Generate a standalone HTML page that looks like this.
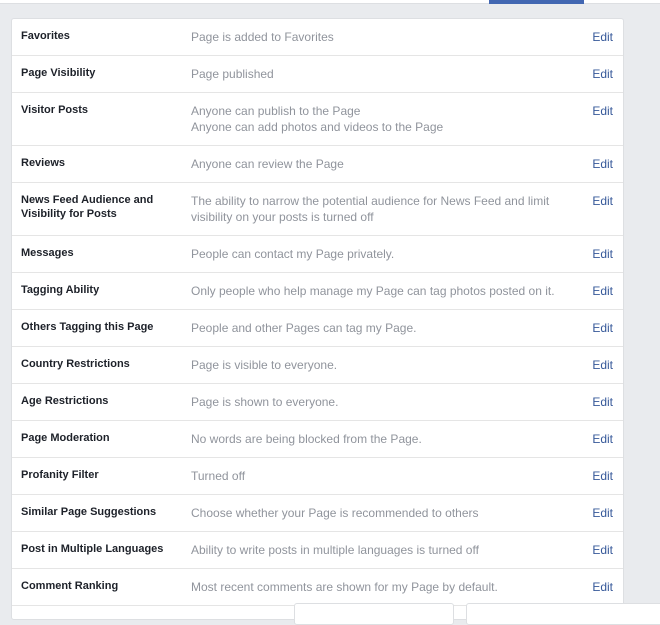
<!DOCTYPE html>
<html><head><style>
body{margin:0;width:660px;height:611px;background:#e9ebee;font-family:"Liberation Sans",Helvetica,Arial,sans-serif;position:relative;overflow:hidden}
.top{position:absolute;left:0;top:0;width:660px;height:3px;background:#fff;border-bottom:1px solid #dddfe2}
.tab{position:absolute;left:489px;top:0;width:95px;height:4px;background:#4267b2}
.card{position:absolute;left:11px;top:18px;width:611px;height:600px;background:#fff;border:1px solid #dddfe2;border-radius:3px}
.row{position:relative;border-bottom:1px solid #e5e5e5;padding:10px 0 10px 0;min-height:16px}
.l{position:absolute;left:9px;top:10px;width:160px;font-weight:bold;font-size:11px;line-height:14px;color:#1d2129}
.v{margin-left:179px;font-size:12px;line-height:16px;color:#90949c;width:380px}
.e{position:absolute;right:10px;top:10px;font-size:12px;line-height:16px;color:#365899}
.b{position:absolute;top:603px;height:20px;background:#fff;border:1px solid #dddfe2;border-radius:3px}
</style></head><body>
<div class="top"></div><div class="tab"></div>
<div class="card">
<div class="row"><div class="l">Favorites</div><div class="v">Page is added to Favorites</div><div class="e">Edit</div></div>
<div class="row"><div class="l">Page Visibility</div><div class="v">Page published</div><div class="e">Edit</div></div>
<div class="row"><div class="l">Visitor Posts</div><div class="v">Anyone can publish to the Page<br>Anyone can add photos and videos to the Page</div><div class="e">Edit</div></div>
<div class="row"><div class="l">Reviews</div><div class="v">Anyone can review the Page</div><div class="e">Edit</div></div>
<div class="row"><div class="l">News Feed Audience and Visibility for Posts</div><div class="v">The ability to narrow the potential audience for News Feed and limit visibility on your posts is turned off</div><div class="e">Edit</div></div>
<div class="row"><div class="l">Messages</div><div class="v">People can contact my Page privately.</div><div class="e">Edit</div></div>
<div class="row"><div class="l">Tagging Ability</div><div class="v">Only people who help manage my Page can tag photos posted on it.</div><div class="e">Edit</div></div>
<div class="row"><div class="l">Others Tagging this Page</div><div class="v">People and other Pages can tag my Page.</div><div class="e">Edit</div></div>
<div class="row"><div class="l">Country Restrictions</div><div class="v">Page is visible to everyone.</div><div class="e">Edit</div></div>
<div class="row"><div class="l">Age Restrictions</div><div class="v">Page is shown to everyone.</div><div class="e">Edit</div></div>
<div class="row"><div class="l">Page Moderation</div><div class="v">No words are being blocked from the Page.</div><div class="e">Edit</div></div>
<div class="row"><div class="l">Profanity Filter</div><div class="v">Turned off</div><div class="e">Edit</div></div>
<div class="row"><div class="l">Similar Page Suggestions</div><div class="v">Choose whether your Page is recommended to others</div><div class="e">Edit</div></div>
<div class="row"><div class="l">Post in Multiple Languages</div><div class="v">Ability to write posts in multiple languages is turned off</div><div class="e">Edit</div></div>
<div class="row"><div class="l">Comment Ranking</div><div class="v">Most recent comments are shown for my Page by default.</div><div class="e">Edit</div></div>
</div>
<div class="b" style="left:294px;width:158px"></div>
<div class="b" style="left:466px;width:200px"></div>
</body></html>
